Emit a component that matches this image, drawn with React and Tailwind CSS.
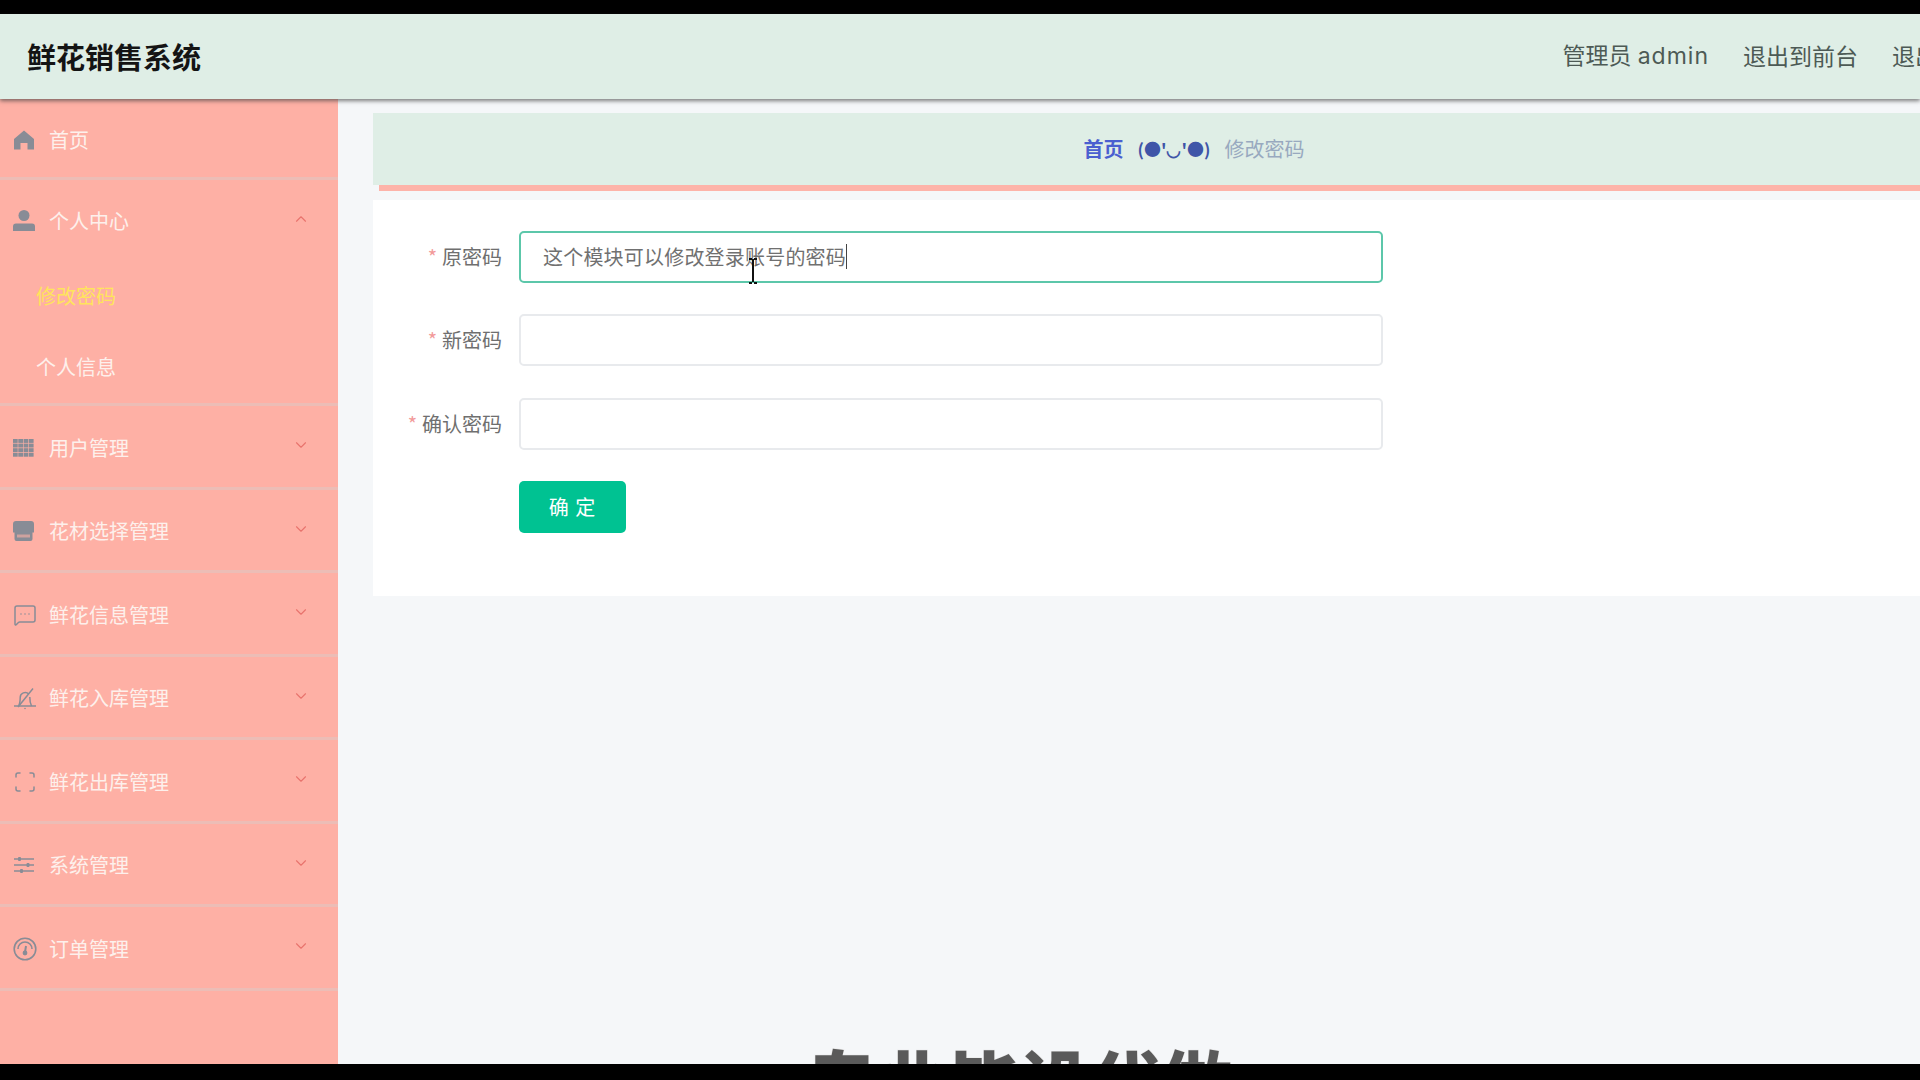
import React from "react";
import { ChevronDown, ChevronUp, MessageSquareMore, Scan } from "lucide-react";

const FONT = "font-['Noto_Sans_CJK_SC','Noto_Sans',sans-serif]";

const HomeIcon = () => (
  <svg width="22" height="22" viewBox="0 0 22 22" fill="#888c96"><path d="M11 1.5 21 10v10.5h-6.5V14h-7v6.5H1V10z" /></svg>
);
const UserIcon = () => (
  <svg width="22" height="24" viewBox="0 0 22 24" fill="#888c96"><circle cx="11" cy="6.5" r="5.5" /><path d="M3 14.5h16a3 3 0 0 1 3 3V22H0v-4.5a3 3 0 0 1 3-3z" /></svg>
);
const GridIcon = () => (
  <svg width="21" height="18" viewBox="0 0 21 18" fill="#888c96">
    {[0, 4.6, 9.2, 13.8].map((y) => [0, 5.3, 10.6, 15.9].map((x) => <rect key={`${x}-${y}`} x={x} y={y} width="4.7" height="3.9" />))}
  </svg>
);
const StoreIcon = () => (
  <svg width="21" height="20" viewBox="0 0 21 20" fill="#888c96"><path d="M3 0h15a3 3 0 0 1 3 3v8.5h-1.5V18a2 2 0 0 1-2 2h-14a2 2 0 0 1-2-2v-6.5H0V3a3 3 0 0 1 3-3z" /><rect x="4" y="13.5" width="13" height="3" fill="#feb0a5" opacity=".6" /></svg>
);
const GaugeIcon = () => (
  <svg width="24" height="24" viewBox="0 0 24 24" fill="none" stroke="#888c96" strokeWidth="1.6"><circle cx="12" cy="12" r="10.8" /><path d="M5 12a7 7 0 0 1 14 0" /><path d="M13 9l-1 6" strokeWidth="2" /><circle cx="12" cy="16" r="1.6" fill="#888c96" /></svg>
);
const BellSlashIcon = () => (
  <svg width="24" height="24" viewBox="0 0 24 24" fill="none" stroke="#888c96" strokeWidth="1.5">
    <path d="M1 20h22" />
    <path d="M5.5 20c1.3-2 1.7-4.500 1.700-8.500a5 5 0 0 1 8.600-3.500" />
    <path d="M18.500 20c-1-2-1.700-4.500-1.700-9" />
    <path d="M5 21 20 2.500" />
    <circle cx="12" cy="22.500" r=".8" fill="#888c96" stroke="none" />
  </svg>
);
const SlidersIcon = () => (
  <svg width="22" height="20" viewBox="0 0 22 20" fill="#888c96" stroke="#888c96" strokeWidth="1.500">
    <path d="M1 4h20M1 10h20M1 16h20" />
    <rect x="5" y="2" width="3" height="4" rx="1" stroke="none" />
    <rect x="13.500" y="8" width="3" height="4" rx="1" stroke="none" />
    <rect x="7" y="14" width="3" height="4" rx="1" stroke="none" />
  </svg>
);

const stroke = { size: 24, color: "#888c96", strokeWidth: 1.5 };

const items = [
  ["用户管理", <GridIcon />],
  ["花材选择管理", <StoreIcon />],
  ["鲜花信息管理", <MessageSquareMore {...stroke} />],
  ["鲜花入库管理", <BellSlashIcon />],
  ["鲜花出库管理", <Scan {...stroke} />],
  ["系统管理", <SlidersIcon />],
  ["订单管理", <GaugeIcon />],
];

function MenuRow({ icon, label, chevron, className = "" }) {
  return (
    <div className={`flex items-center pt-[3px] text-[20px] leading-none text-[#fdf0ec] ${className}`}>
      <span className="w-[49px] pl-[13px] flex items-center shrink-0">{icon}</span>
      <span>{label}</span>
      {chevron && <span className="ml-auto mr-[28px] -mt-[5px] text-[#e8736d]">{chevron}</span>}
    </div>
  );
}

function Field({ label, value, focused }) {
  return (
    <div className="flex items-center h-[52px]">
      <div className="w-[146px] pr-[17px] text-right text-[20px] text-[#6f6f6f] whitespace-nowrap">
        <span className="text-[#f29a9a] mr-[5px]">*</span>
        {label}
      </div>
      <div className="relative">
        <input
          readOnly
          value={value || ""}
          className={`w-[864px] h-[52px] px-[22px] pb-[2px] tracking-[0.2px] rounded-[5px] bg-white text-[20px] text-[#707070] outline-none border-2 ${focused ? "border-[#5cc7aa]" : "border-[#e8eaed]"}`}
        />
        {focused && (
          <>
            <span className="absolute left-[327px] top-[13px] h-[25px] w-[1px] bg-[#444]" />
            <svg className="absolute left-[229px] top-[27px]" width="10" height="26" viewBox="0 0 10 26" fill="none" stroke="#111" strokeWidth="2">
              <path d="M5 1v23M1 25h3M6 25h3M1 1h3M6 1h3" />
            </svg>
          </>
        )}
      </div>
    </div>
  );
}

export default function App() {
  return (
    <div className={`relative w-[1920px] h-[1080px] overflow-hidden flex flex-col bg-black ${FONT}`}>
      <div className="h-[14px] shrink-0 bg-black" />
      <header className="relative z-10 h-[85px] shrink-0 flex items-center bg-[#dfeee6] shadow-[0_2px_4px_rgba(60,60,60,0.65)] whitespace-nowrap">
        <div className="pl-[27px] text-[29px] font-bold text-[#141414]">鲜花销售系统</div>
        <div className="ml-auto mr-[-64px] -mt-[2px] flex items-center gap-[34px] text-[23px] text-[#4d5a55] shrink-0">
          <span>管理员 <span className="font-['Inter',sans-serif] tracking-[1px] ml-[1px]">admin</span></span>
          <span>退出到前台</span>
          <span>退出登录</span>
        </div>
      </header>
      <div className="flex-1 flex min-h-0">
        <aside className="w-[338px] shrink-0 bg-[#feb0a5] overflow-hidden">
          <MenuRow icon={<HomeIcon />} label="首页" className="h-[81px] border-b-[3px] border-[#ecbdb6]" />
          <div className="h-[226px] border-b-[3px] border-[#ecbdb6] flex flex-col">
            <MenuRow icon={<UserIcon />} label="个人中心" chevron={<ChevronUp size={18} strokeWidth={1.5} />} className="h-[80px]" />
            <div className="pl-[36px] mt-[1px] h-[72px] flex items-center text-[20px] text-[#ffe45c]">修改密码</div>
            <div className="pl-[36px] h-[72px] flex items-center text-[20px] text-[#fdf0ec]">个人信息</div>
          </div>
          {items.map(([label, icon]) => (
            <MenuRow key={label} icon={icon} label={label} chevron={<ChevronDown size={18} strokeWidth={1.5} />} className="h-[83.5px] border-b-[3px] border-[#ecbdb6]" />
          ))}
        </aside>
        <main className="flex-1 min-w-0 overflow-hidden bg-[#f5f7f9] pl-[35px] pt-[14px]">
          <div className="w-[1642px]">
            <div className="h-[72px] bg-[#dfeee6] flex items-center justify-center gap-[14px] text-[20px] text-[#98a9bf] whitespace-nowrap">
              <span className="font-bold text-[#4a5fd0]">首页</span>
              <span className="font-bold text-[17px] text-[#3f55a8]">(●'◡'●)</span>
              <span>修改密码</span>
            </div>
            <div className="ml-[6px] h-[6px] bg-[#fdb3a9]" />
            <div className="mt-[9px] h-[396px] bg-white pt-[31px] flex flex-col gap-[31.4px]">
              <Field label="原密码" value="这个模块可以修改登录账号的密码" focused />
              <Field label="新密码" />
              <Field label="确认密码" />
              <div className="pl-[146px]">
                <button className="w-[107px] h-[52px] rounded-[5px] bg-[#00c292] text-white text-[20px] tracking-[1px]">确 定</button>
              </div>
            </div>
          </div>
        </main>
      </div>
      <div className="relative z-10 h-[16px] shrink-0 bg-black" />
      <div className="absolute left-[806px] top-[1044px] text-[71px] leading-none font-black text-[#5a5a5a] whitespace-nowrap [-webkit-text-stroke:1px_#e8e8e8] [paint-order:stroke_fill]">专业毕设代做</div>
    </div>
  );
}
